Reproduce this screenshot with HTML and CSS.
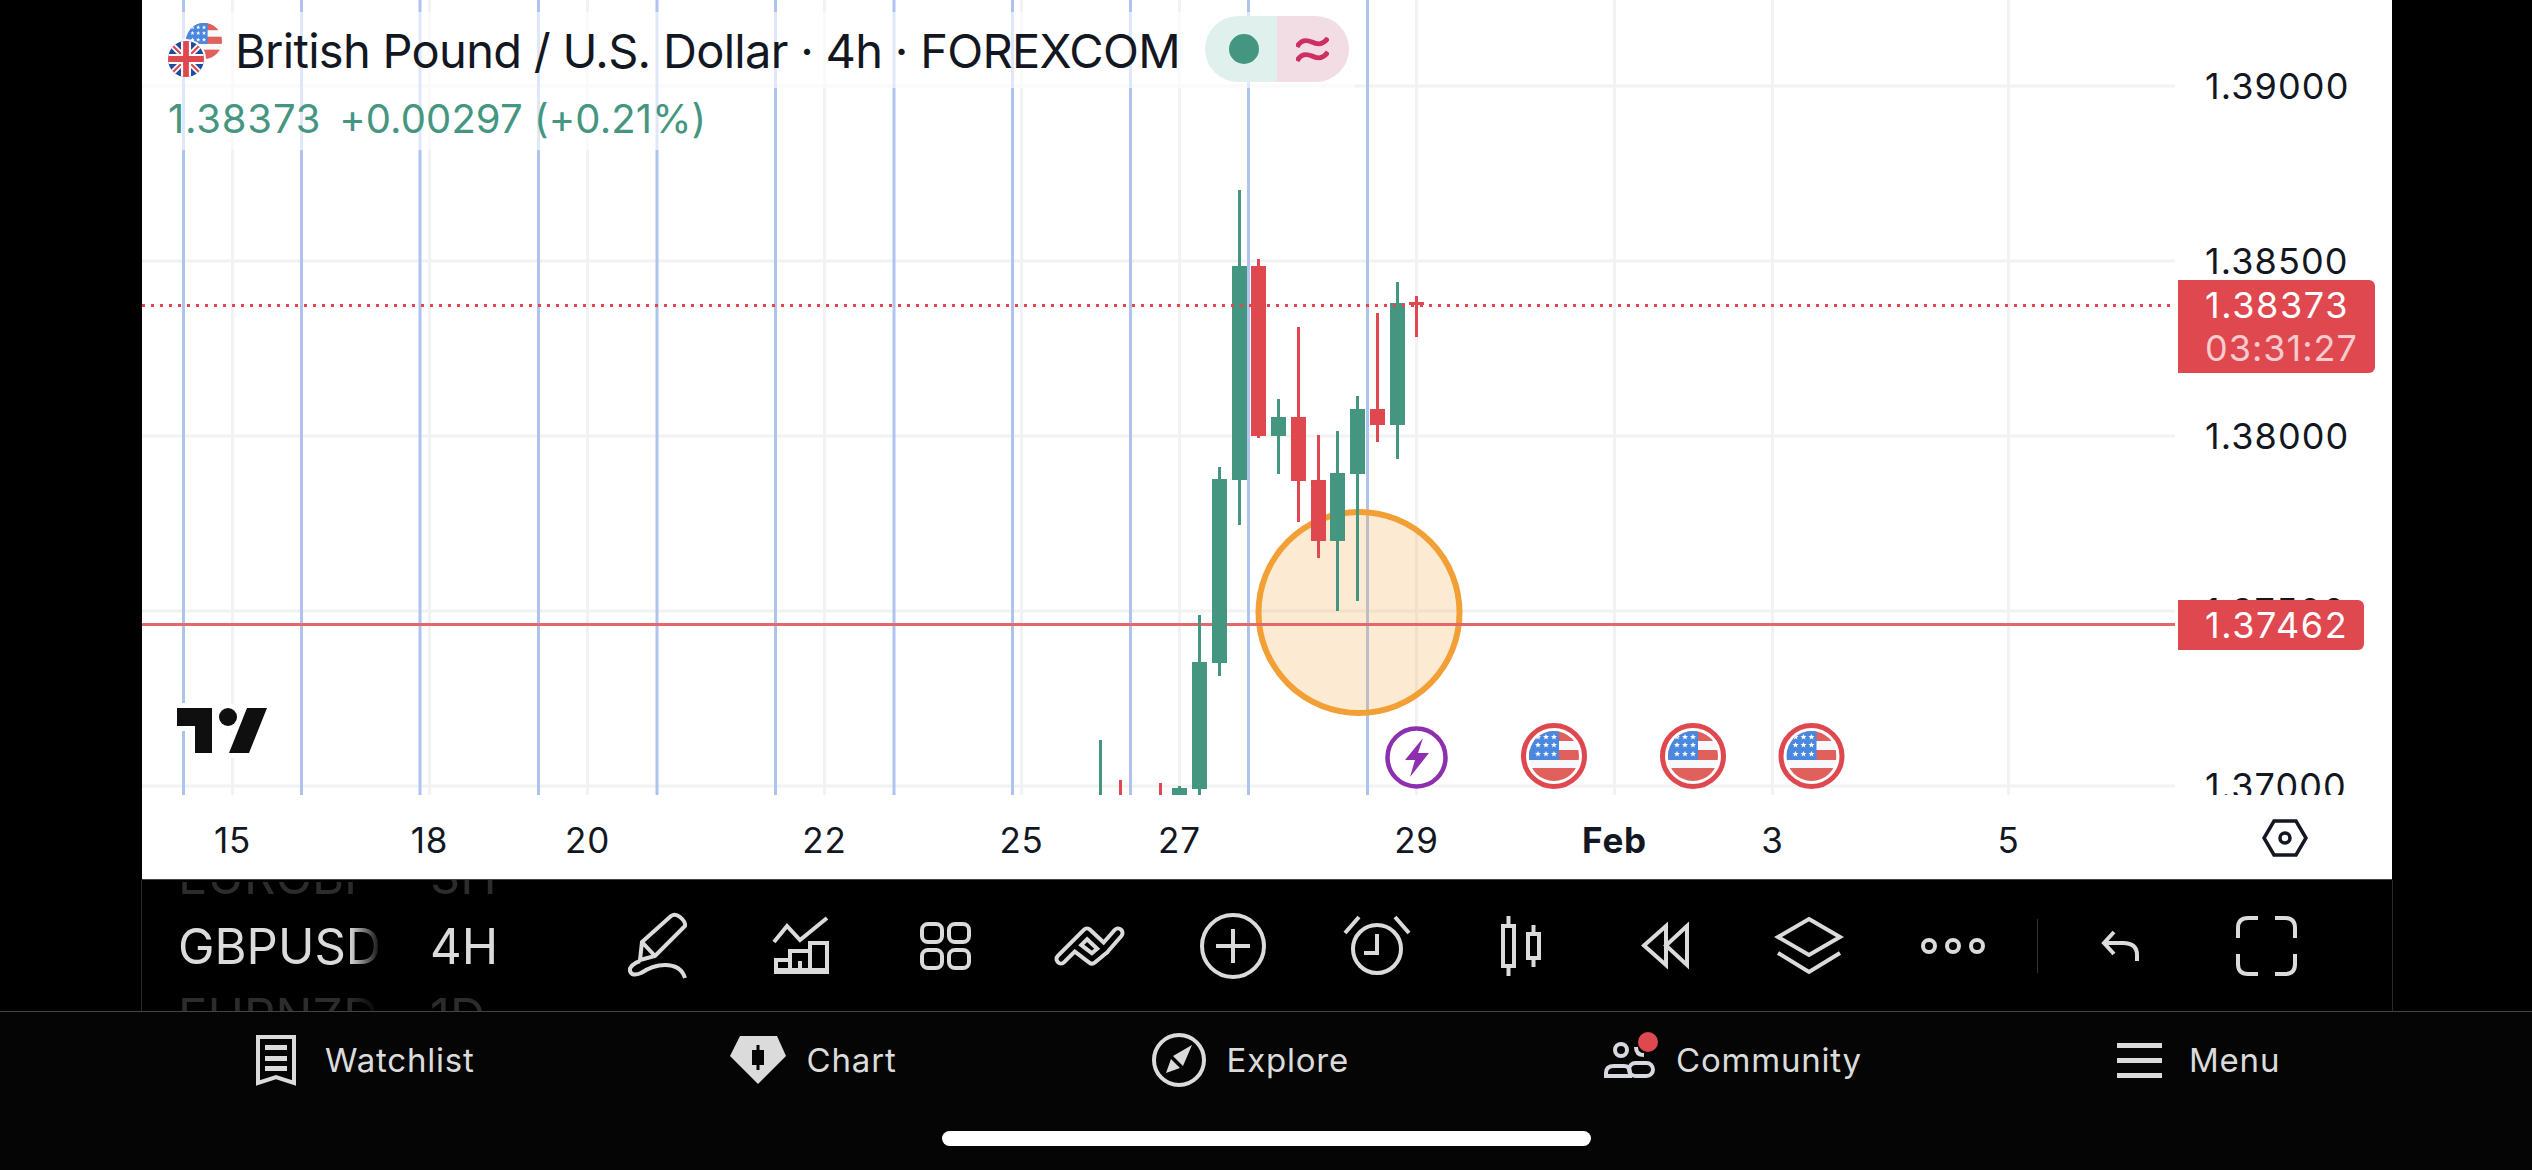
FILE: index.html
```html
<!DOCTYPE html>
<html lang="en">
<head>
    <meta charset="UTF-8">
    <meta name="viewport" content="width=device-width, initial-scale=1.0">
    <title>GBPUSD Chart</title>
    <link rel="stylesheet" href="styles.css">
</head>
<body>
    <svg class="defs" width="0" height="0">
        <defs>
            <clipPath id="round50"><circle cx="25" cy="25" r="25"/></clipPath>
            <path id="star" d="M0 -3 L.9 -.9 L3 -.9 L1.3 .4 L1.9 2.6 L0 1.3 L-1.9 2.6 L-1.3 .4 L-3 -.9 L-.9 -.9 Z" fill="#fff"/>
            <symbol id="usd" viewBox="0 0 50 50">
                <g clip-path="url(#round50)">
                    <rect width="50" height="50" fill="#f7f8fc"/>
                    <rect width="50" height="10" fill="#e0605c"/>
                    <rect y="19" width="50" height="10" fill="#e0605c"/>
                    <rect y="37" width="50" height="13" fill="#e0605c"/>
                    <rect width="30" height="29" fill="#4a88e0"/>
                    <use href="#star" x="9" y="6"/><use href="#star" x="17" y="6"/><use href="#star" x="25" y="6"/>
                    <use href="#star" x="9" y="14"/><use href="#star" x="17" y="14"/><use href="#star" x="25" y="14"/>
                    <use href="#star" x="9" y="23"/><use href="#star" x="17" y="23"/><use href="#star" x="25" y="23"/>
                </g>
            </symbol>
            <symbol id="gbp" viewBox="0 0 50 50">
                <g clip-path="url(#round50)">
                    <rect width="50" height="50" fill="#1f4a9e"/>
                    <path d="M0 0 L50 50 M50 0 L0 50" stroke="#fff" stroke-width="8"/>
                    <path d="M0 0 L50 50 M50 0 L0 50" stroke="#e0474f" stroke-width="3"/>
                    <path d="M25 0 V50 M0 25 H50" stroke="#fff" stroke-width="14"/>
                    <path d="M25 0 V50 M0 25 H50" stroke="#e0474f" stroke-width="8"/>
                </g>
            </symbol>
        </defs>
    </svg>

    <div class="screen">
        <div class="chart">
            <div class="plot">
                <svg class="canvas" viewBox="142 0 2250 795" width="2250" height="795">
                    <g class="grid">
                        <path d="M142 86 H2175 M142 261 H2175 M142 436 H2175 M142 611 H2175 M142 786 H2175"/>
                        <path d="M232.5 0 V795 M429.5 0 V795 M587.5 0 V795 M824.5 0 V795 M1021.5 0 V795 M1179.5 0 V795 M1416.5 0 V795 M1614.5 0 V795 M1772.5 0 V795 M2008.5 0 V795"/>
                    </g>
                    <path class="session" d="M183.5 0 V795 M301.5 0 V795 M420 0 V795 M538.5 0 V795 M657 0 V795 M775.5 0 V795 M894 0 V795 M1012.5 0 V795 M1130.5 0 V795 M1248.5 0 V795 M1367.5 0 V795"/>
                    <circle class="zone" cx="1359" cy="612.5" r="100.5"/>
                    <rect class="alert-line" x="142" y="623" width="2033" height="3"/>

                    <g class="up">
                        <rect x="1099" y="740" width="3" height="55"/>
                        <rect x="1178" y="786" width="3" height="9"/><rect x="1172" y="788" width="15" height="7"/>
                        <rect x="1198" y="615" width="3" height="180"/><rect x="1192" y="662" width="15" height="127"/>
                        <rect x="1218" y="467" width="3" height="209"/><rect x="1212" y="479" width="15" height="184"/>
                        <rect x="1238" y="190" width="3" height="335"/><rect x="1232" y="266" width="15" height="214"/>
                        <rect x="1277" y="399" width="3" height="75"/><rect x="1271" y="417" width="15" height="19"/>
                        <rect x="1336" y="431" width="3" height="180"/><rect x="1330" y="473" width="15" height="68"/>
                        <rect x="1356" y="396" width="3" height="205"/><rect x="1350" y="409" width="15" height="65"/>
                        <rect x="1396" y="282" width="3" height="177"/><rect x="1390" y="303" width="15" height="122"/>
                    </g>
                    <g class="down">
                        <rect x="1119" y="780" width="3" height="15"/>
                        <rect x="1159" y="783" width="3" height="12"/>
                        <rect x="1257" y="259" width="3" height="179"/><rect x="1251" y="266" width="15" height="170"/>
                        <rect x="1297" y="327" width="3" height="195"/><rect x="1291" y="417" width="15" height="64"/>
                        <rect x="1317" y="435" width="3" height="123"/><rect x="1311" y="480" width="15" height="61"/>
                        <rect x="1376" y="313" width="3" height="129"/><rect x="1370" y="409" width="15" height="16"/>
                        <rect x="1415" y="296" width="3" height="41"/><rect x="1409" y="302" width="15" height="3"/>
                    </g>
                    <path class="last-price" d="M142 305.5 H2175"/>

                    <g class="tv-logo">
                        <path d="M177 708 H212 V753 H195 V726 H177 Z M247 708 H267 L249 753 H229 Z"/>
                        <ellipse cx="228" cy="717" rx="9" ry="9"/>
                    </g>

                    <circle class="event-ring" cx="1416.5" cy="757.5" r="29"/>
                    <path class="event-bolt" d="M1423 738 L1405 760 H1415 L1410 777 L1429 753 H1418 Z"/>
                    <g class="event-flag">
                        <circle cx="1554" cy="756" r="30.5"/>
                        <use href="#usd" x="1529" y="731" width="50" height="50"/>
                    </g>
                    <g class="event-flag">
                        <circle cx="1693" cy="756" r="30.5"/>
                        <use href="#usd" x="1668" y="731" width="50" height="50"/>
                    </g>
                    <g class="event-flag">
                        <circle cx="1811.5" cy="756" r="30.5"/>
                        <use href="#usd" x="1786.5" y="731" width="50" height="50"/>
                    </g>
                </svg>

                <div class="legend">
                    <div class="legend-title">
                        <svg class="pair-flags" viewBox="0 0 54 54" width="54" height="54">
                            <use href="#usd" x="18" y="0" width="36" height="36"/>
                            <circle cx="18" cy="36" r="20" fill="#fff"/>
                            <use href="#gbp" x="0" y="18" width="36" height="36"/>
                        </svg>
                        <span class="symbol-name">British Pound / U.S. Dollar · 4h · FOREXCOM</span>
                        <div class="status-pill">
                            <div class="status-open"><span class="status-dot"></span></div>
                            <div class="status-delayed">
                                <svg viewBox="0 0 33 25" width="33" height="25">
                                    <path d="M1 10 C5 2 11 3 16 5 C22 8 27 8 32 1 M1 24 C5 16 11 17 16 19 C22 22 27 22 32 15"/>
                                </svg>
                            </div>
                        </div>
                    </div>
                    <div class="legend-values">1.38373 <span class="change">+0.00297 (+0.21%)</span></div>
                </div>

                <div class="price-tick" style="top: 86px">1.39000</div>
                <div class="price-tick" style="top: 261px">1.38500</div>
                <div class="price-tick" style="top: 436px">1.38000</div>
                <div class="price-tick" style="top: 611px">1.37500</div>
                <div class="price-tick" style="top: 786px">1.37000</div>

                <div class="price-tag last-tag">
                    <span>1.38373</span>
                    <span class="countdown">03:31:27</span>
                </div>
                <div class="price-tag alert-tag">1.37462</div>
            </div>

            <div class="time-axis">
                <span class="time-tick" style="left: 90.5px">15</span>
                <span class="time-tick" style="left: 287.5px">18</span>
                <span class="time-tick" style="left: 445.5px">20</span>
                <span class="time-tick" style="left: 682.5px">22</span>
                <span class="time-tick" style="left: 879.5px">25</span>
                <span class="time-tick" style="left: 1037.5px">27</span>
                <span class="time-tick" style="left: 1274.5px">29</span>
                <span class="time-tick month" style="left: 1472.5px">Feb</span>
                <span class="time-tick" style="left: 1630.5px">3</span>
                <span class="time-tick" style="left: 1866.5px">5</span>
                <svg class="axis-settings" viewBox="0 0 46 38" width="46" height="38">
                    <path d="M12 2 H34 L44 19 L34 36 H12 L2 19 Z"/>
                    <circle cx="23" cy="19" r="5"/>
                </svg>
            </div>
        </div>

        <div class="toolbar">
            <div class="picker">
                <div class="picker-col picker-symbols">
                    <span class="dim">EURGBP</span>
                    <span>GBPUSD</span>
                    <span class="dim">EURNZD</span>
                </div>
                <div class="picker-col">
                    <span class="dim">3H</span>
                    <span>4H</span>
                    <span class="dim">1D</span>
                </div>
            </div>

            <div class="tool">
                <svg viewBox="0 0 60 66" width="60" height="66">
                    <path d="M15 29 L44 3 Q48 0 53 4 Q59 9 58 13 L28 43 L13 47 Z M15 29 L28 43"/>
                    <path d="M13 48 Q2 52 3 58 Q5 64 14 60 Q26 52 38 52 Q54 52 58 65"/>
                </svg>
            </div>
            <div class="tool">
                <svg viewBox="0 0 56 57" width="56" height="57">
                    <path d="M1 25 L14 9 L27 23 L54 1"/>
                    <path d="M3 55 V43 H17 V55 Z M17 55 V34 H37 V55 Z M37 55 V26 H54 V55 Z"/>
                    <path class="bar-foot" d="M2 53 H55 M27 44 V53"/>
                </svg>
            </div>
            <div class="tool">
                <svg viewBox="0 0 51 48" width="51" height="48">
                    <rect x="2" y="2" width="20" height="18" rx="6"/>
                    <rect x="29" y="2" width="20" height="18" rx="6"/>
                    <rect x="2" y="28" width="20" height="18" rx="6"/>
                    <rect x="29" y="28" width="20" height="18" rx="6"/>
                </svg>
            </div>
            <div class="tool">
                <svg viewBox="0 0 71 41" width="71" height="41">
                    <g class="strip-outer">
                        <path d="M21 21 L38 34 L50 24"/>
                        <path d="M7 34 L33 8 L50 24 L64 8"/>
                    </g>
                    <g class="strip-inner">
                        <path d="M21 21 L38 34 L50 24"/>
                        <path d="M7 34 L33 8 L50 24 L64 8"/>
                    </g>
                </svg>
            </div>
            <div class="tool">
                <svg viewBox="0 0 66 66" width="66" height="66">
                    <circle cx="33" cy="33" r="31"/>
                    <path d="M33 16 V50 M16 33 H50"/>
                </svg>
            </div>
            <div class="tool">
                <svg viewBox="0 0 66 60" width="66" height="60">
                    <circle cx="33" cy="33" r="24"/>
                    <path d="M1 17 L15 1 M51 1 L65 17 M33 18 V37 H20"/>
                </svg>
            </div>
            <div class="tool">
                <svg viewBox="0 0 40 60" width="40" height="60">
                    <rect x="2" y="10" width="11" height="40"/>
                    <rect x="27" y="18" width="11" height="24"/>
                    <path d="M7.500 0 V10 M7.500 50 V60 M32.500 9 V18 M32.500 42 V51"/>
                </svg>
            </div>
            <div class="tool">
                <svg viewBox="0 0 48 43" width="48" height="43">
                    <path d="M25 2 L3 21.500 L25 41 Z M46 2 L25 21.500 L46 41 Z"/>
                </svg>
            </div>
            <div class="tool">
                <svg viewBox="0 0 66 57" width="66" height="57">
                    <path d="M33 2 L64 20 L33 38 L2 20 Z"/>
                    <path d="M2 36 L33 55 L64 36"/>
                </svg>
            </div>
            <div class="tool">
                <svg viewBox="0 0 64 16" width="64" height="16">
                    <circle cx="8" cy="8" r="6"/>
                    <circle cx="32" cy="8" r="6"/>
                    <circle cx="56" cy="8" r="6"/>
                </svg>
            </div>
            <div class="tool-divider"></div>
            <div class="tool tool-wide">
                <svg viewBox="0 0 38 30" width="38" height="30">
                    <path d="M13 1 L3 12 L13 23 M3 12 H22 Q36 12 36 24 V30"/>
                </svg>
            </div>
            <div class="tool tool-wide">
                <svg viewBox="0 0 61 60" width="61" height="60">
                    <path d="M22 2 H12 Q2 2 2 12 V22 M39 2 H49 Q59 2 59 12 V22 M2 38 V48 Q2 58 12 58 H22 M59 38 V48 Q59 58 49 58 H39"/>
                </svg>
            </div>
        </div>
    </div>

    <div class="tabbar">
        <div class="tabs">
            <div class="tab">
                <svg class="tab-icon watchlist" viewBox="0 0 40 51" width="40" height="51">
                    <path d="M2 2 H38 V48 L20 42 L2 48 Z"/>
                    <rect class="solid" x="9" y="10" width="22" height="5"/>
                    <rect class="solid" x="9" y="21" width="22" height="5"/>
                    <rect class="solid" x="9" y="31" width="22" height="5"/>
                </svg>
                <span>Watchlist</span>
            </div>
            <div class="tab">
                <svg class="tab-icon" viewBox="0 0 56 48" width="56" height="48">
                    <path class="solid" d="M10 0 H47 L56 20 L28 48 L0 20 Z"/>
                    <path class="cutout" d="M26.500 9 H29.500 V14 H34 V29 H29.500 V34 H26.500 V29 H22 V14 H26.500 Z"/>
                </svg>
                <span>Chart</span>
            </div>
            <div class="tab">
                <svg class="tab-icon" viewBox="0 0 54 54" width="54" height="54">
                    <circle cx="27" cy="27" r="25"/>
                    <path class="solid" d="M40 12 L21 23 L31 33 Z M14 40 L19 26 L28 35 Z"/>
                </svg>
                <span>Explore</span>
            </div>
            <div class="tab">
                <div class="badge-wrap">
                    <svg class="tab-icon community" viewBox="0 0 51 36" width="51" height="36">
                        <circle cx="17" cy="8" r="6"/>
                        <path d="M40 13 Q32 13 32 5"/>
                        <path d="M2 34 V31 Q2 24 10 24 H20 Q26 24 26 31 V34 Z"/>
                        <rect x="25" y="21" width="24" height="13" rx="6.500"/>
                    </svg>
                    <span class="badge"></span>
                </div>
                <span>Community</span>
            </div>
            <div class="tab">
                <div class="menu-icon"><span></span><span></span><span></span></div>
                <span>Menu</span>
            </div>
        </div>
        <div class="home-indicator"></div>
    </div>
</body>
</html>
```

FILE: styles.css
```css
body {
    margin: 0;
    width: 2532px;
    height: 1170px;
    overflow: hidden;
    background: #000;
    font-family: 'Inter', 'Liberation Sans', sans-serif;
    color: #131722;
}

.defs {
    display: block;
    height: 0;
}

.screen {
    width: 2250px;
    margin-left: 142px;
}

.chart {
    height: 879px;
    background: #fff;
    border-bottom: 1px solid #434343;
}

.plot {
    position: relative;
    height: 795px;
    overflow: hidden;
}

.canvas {
    display: block;
}

.grid path {
    fill: none;
    stroke: #f2f2f2;
    stroke-width: 3;
}

.session {
    fill: none;
    stroke: #aec4ef;
    stroke-width: 3;
}

.zone {
    fill: rgba(242, 165, 50, 0.22);
    stroke: #f2a035;
    stroke-width: 6;
}

.alert-line {
    fill: #e2686c;
}

.up {
    fill: #459681;
}

.down {
    fill: #e0484f;
}

.last-price {
    fill: none;
    stroke: #e0484f;
    stroke-width: 3;
    stroke-dasharray: 3 6;
}

.tv-logo {
    fill: #0f0f0f;
    stroke: #fff;
    stroke-width: 10;
    paint-order: stroke;
}

.event-ring {
    fill: #fff;
    stroke: #8e2fb0;
    stroke-width: 4.5;
}

.event-bolt {
    fill: #8e2fb0;
}

.event-flag circle {
    fill: #fff;
    stroke: #e0484f;
    stroke-width: 5;
}

/* legend over the chart */
.legend {
    position: absolute;
    top: 12px;
    left: 0;
}

.legend-title {
    display: inline-flex;
    align-items: center;
    height: 76px;
    padding-left: 26px;
    padding-right: 6px;
    background: rgba(255, 255, 255, 0.6);
}

.pair-flags {
    margin-right: 13px;
}

.symbol-name {
    font-size: 47px;
    letter-spacing: -0.7px;
    white-space: nowrap;
}

.status-pill {
    display: flex;
    width: 144px;
    height: 66px;
    margin-left: 25px;
    margin-top: -2px;
    border-radius: 33px;
    overflow: hidden;
}

.status-open, .status-delayed {
    display: flex;
    align-items: center;
    justify-content: center;
}

.status-open {
    width: 72px;
    background: #e0f0ed;
    padding-left: 6px;
    box-sizing: border-box;
}

.status-delayed {
    width: 72px;
    background: #f3dde5;
}

.status-dot {
    width: 30px;
    height: 30px;
    border-radius: 50%;
    background: #459681;
}

.status-delayed path {
    fill: none;
    stroke: #cc2f60;
    stroke-width: 5;
}

.legend-values {
    display: table;
    height: 58px;
    line-height: 62px;
    padding: 0 6px 0 26px;
    font-size: 40px;
    letter-spacing: 0.8px;
    color: #459681;
    background: rgba(255, 255, 255, 0.6);
    white-space: pre;
}

.change {
    margin-left: 6px;
    letter-spacing: 0.1px;
}

/* price axis */
.price-tick {
    position: absolute;
    left: 2063px;
    transform: translateY(-50%);
    font-size: 36px;
    line-height: 40px;
    letter-spacing: 1.1px;
}

.price-tag {
    position: absolute;
    left: 2036px;
    display: flex;
    flex-direction: column;
    justify-content: center;
    box-sizing: border-box;
    padding-left: 27px;
    font-size: 36px;
    letter-spacing: 1.6px;
    color: #fff;
    background: #e0484f;
    border-radius: 0 6px 6px 0;
}

.last-tag {
    top: 280px;
    width: 197px;
    height: 93px;
    line-height: 43px;
}

.countdown {
    letter-spacing: 1px;
    color: rgba(255, 255, 255, 0.72);
}

.alert-tag {
    top: 600px;
    width: 186px;
    height: 50px;
    line-height: 50px;
}

/* time axis */
.time-axis {
    position: relative;
    height: 84px;
}

.time-tick {
    position: absolute;
    top: 24px;
    transform: translateX(-50%);
    font-size: 35px;
    letter-spacing: 0.8px;
    line-height: 42px;
}

.month {
    font-weight: 700;
}

.axis-settings {
    position: absolute;
    left: 2120px;
    top: 24px;
}

.axis-settings path, .axis-settings circle {
    fill: none;
    stroke: #131722;
    stroke-width: 3.5;
}

/* bottom tool strip */
.toolbar {
    display: flex;
    align-items: center;
    height: 131px;
    background: #000;
    box-shadow: -1px 0 0 #2a2a2a, 1px 0 0 #2a2a2a;
}

.picker {
    display: flex;
    gap: 48px;
    box-sizing: border-box;
    width: 443px;
    height: 131px;
    padding-left: 36px;
    padding-top: 2px;
    overflow: hidden;
    font-size: 49px;
    color: #dbdbdb;
}

.picker-col {
    display: flex;
    flex-direction: column;
    justify-content: center;
    line-height: 70px;
}

.picker-symbols {
    width: 204px;
    overflow: hidden;
    -webkit-mask-image: linear-gradient(to right, #000 84%, transparent 100%);
    mask-image: linear-gradient(to right, #000 84%, transparent 100%);
}

.picker .dim {
    color: #2c2c2c;
}

.tool {
    display: flex;
    align-items: center;
    justify-content: center;
    flex: none;
    width: 144px;
}

.tool-wide {
    width: 146px;
}

.tool svg {
    fill: none;
    stroke: #dbdbdb;
    stroke-width: 4;
    overflow: visible;
}

.strip-outer path {
    stroke-width: 13;
    stroke-linecap: round;
    stroke-linejoin: round;
}

.strip-inner path {
    stroke: #000;
    stroke-width: 5;
    stroke-linecap: round;
    stroke-linejoin: round;
}

.tool-divider {
    flex: none;
    width: 1px;
    height: 54px;
    margin: 0 9px 0 12px;
    background: #333;
}

/* tab bar */
.tabbar {
    height: 159px;
    box-sizing: border-box;
    border-top: 1px solid #434343;
    background: #050505;
}

.tabs {
    display: flex;
    align-items: center;
    gap: 255px;
    height: 96px;
    padding-left: 256px;
}

.tab {
    display: flex;
    align-items: center;
    gap: 21px;
    font-size: 33px;
    letter-spacing: 0.8px;
    color: #dbdbdb;
}

.tab-icon {
    display: block;
    fill: none;
    stroke: #dbdbdb;
    stroke-width: 4;
}

.tab-icon .solid {
    fill: #dbdbdb;
    stroke: none;
}

.tab-icon .cutout {
    fill: #050505;
    stroke: none;
}

.watchlist {
    margin-right: 8px;
}

.community {
    stroke: #d6dae0;
}

.badge-wrap {
    position: relative;
}

.badge {
    position: absolute;
    top: -10px;
    right: -3px;
    width: 20px;
    height: 20px;
    border-radius: 50%;
    background: #e0484f;
}

.menu-icon {
    display: flex;
    flex-direction: column;
    gap: 10px;
    width: 45px;
    margin-right: 6px;
}

.menu-icon span {
    height: 5px;
    background: #dbdbdb;
}

.home-indicator {
    width: 649px;
    height: 15px;
    margin: 23px auto 0;
    border-radius: 8px;
    background: #fff;
}
```
